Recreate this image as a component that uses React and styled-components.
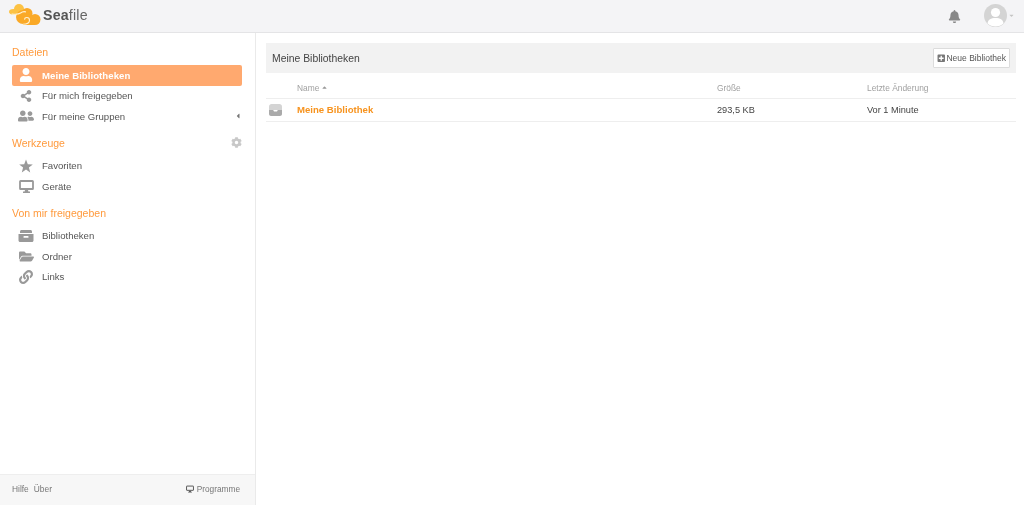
import React from 'react'
import styled, { createGlobalStyle } from 'styled-components'
import { FaUser, FaShareAlt, FaUserFriends, FaFolderOpen, FaLink, FaCog, FaBell, FaPlusSquare, FaCaretLeft, FaCaretUp, FaCaretDown } from 'react-icons/fa'

const GlobalStyle = createGlobalStyle`
  *, *::before, *::after { box-sizing: border-box; }
  html, body { margin: 0; padding: 0; height: 100%; background: #fff; }
  body { font-family: "Liberation Sans", Arial, sans-serif; color: #333; }
  #root { height: 505px; }
`

const Page = styled.div`
  width: 1024px;
  height: 505px;
  display: flex;
  flex-direction: column;
  overflow: hidden;
  background: #fff;
  /* the reference is a downscaled capture, its text is soft */
  filter: blur(0.3px);
`

const Header = styled.header`
  height: 33px;
  flex: none;
  display: flex;
  justify-content: space-between;
  align-items: center;
  background: #f4f4f6;
  border-bottom: 1px solid #e4e4e6;
`

const Logo = styled.div`
  display: flex;
  align-items: center;
  gap: 1px;
  padding: 0 0 2px 9px;
  font-size: 14.2px;
  color: #666;
  letter-spacing: 0.2px;
  b { font-weight: 700; color: #555; }
`

const HeaderRight = styled.div`
  display: flex;
  align-items: center;
  padding-right: 9px;
  color: #888;
`

const Avatar = styled.div`
  width: 23px;
  height: 23px;
  margin: 0 0 2px 23px;
  border-radius: 50%;
  background: #d4d4d4;
  overflow: hidden;
`

const Caret = styled.span`
  display: flex;
  font-size: 7px;
  color: #c4c4c4;
  margin: 0 0 2px 1px;
`

const Body = styled.div`
  flex: 1;
  display: flex;
  min-height: 0;
`

const Side = styled.aside`
  width: 256px;
  flex: none;
  display: flex;
  flex-direction: column;
  border-right: 1px solid #eaeaea;
`

const SideMain = styled.div`
  flex: 1;
  padding: 12px 13px 0 12px;
`

const SectionTitle = styled.h3`
  margin: ${p => p.$top || 0}px 0 0;
  height: 14px;
  display: flex;
  justify-content: space-between;
  align-items: center;
  font-size: 10.5px;
  line-height: 14px;
  font-weight: 400;
  color: #ff9a3d;
`

const Gear = styled.span`
  display: flex;
  font-size: 11px;
  color: #c8c8c8;
`

const NavList = styled.ul`
  list-style: none;
  margin: 6px 0 0;
  padding: 0;
`

const NavItem = styled.li`
  height: 20.5px;
  display: flex;
  align-items: center;
  padding-left: 6px;
  border-radius: 2px;
  font-size: 9.6px;
  font-weight: ${p => (p.$active ? 700 : 400)};
  letter-spacing: ${p => (p.$active ? '0.05px' : '0')};
  color: ${p => (p.$active ? '#fff' : '#555')};
  background: ${p => (p.$active ? '#ffa96f' : 'transparent')};
`

const NavIcon = styled.span`
  width: 16px;
  margin-right: 8px;
  display: flex;
  justify-content: center;
  font-size: ${p => p.$size || 14}px;
  color: ${p => (p.$active ? '#fff' : '#999')};
`

const Arrow = styled.span`
  margin-left: auto;
  display: flex;
  font-size: 8px;
  color: #777;
`

const SideFooter = styled.footer`
  height: 31px;
  flex: none;
  display: flex;
  justify-content: space-between;
  align-items: center;
  padding: 0 15px 3px 12px;
  background: #f7f7f7;
  border-top: 1px solid #eeeeee;
  font-size: 8.4px;
  color: #777;
`

const FooterLinks = styled.div`
  display: flex;
  gap: 5px;
`

const Programs = styled.div`
  display: flex;
  align-items: center;
  gap: 3px;
  font-size: 8.3px;
  color: #777;
`

const Main = styled.main`
  flex: 1;
  padding: 10px 8px 0 10px;
`

const PanelHead = styled.div`
  height: 30px;
  display: flex;
  justify-content: space-between;
  align-items: center;
  padding: 0 6px;
  background: #f2f2f2;
  font-size: 10.4px;
  color: #444;
`

const NewButton = styled.button`
  height: 20px;
  width: 77px;
  padding: 0;
  display: flex;
  align-items: center;
  justify-content: center;
  gap: 1px;
  background: #fff;
  border: 1px solid #dcdcdc;
  border-radius: 1px;
  font-family: inherit;
  font-size: 8.5px;
  color: #555;
  svg { font-size: 8.5px; color: #777; }
`

const Row = styled.div`
  display: grid;
  grid-template-columns: 31px 420px 150px 1fr;
  align-items: center;
  height: ${p => p.$h}px;
  padding: ${p => (p.$head ? '4px 0 0' : '0 0 1px')};
  border-bottom: 1px solid #eeeeee;
  font-size: ${p => (p.$head ? 8.4 : 9.2)}px;
  color: ${p => (p.$head ? '#a0a0a0' : '#444')};
`

const NameHead = styled.span`
  display: flex;
  align-items: center;
  gap: 2px;
  svg { font-size: 7px; color: #999; }
`

const LibName = styled.span`
  font-weight: 700;
  font-size: 9.6px;
  color: #f7931e;
`

const LibIconCell = styled.span`
  display: flex;
  padding-left: 3px;
`

const CloudLogo = () => (
  <svg width="33" height="22" viewBox="0 0 33 22">
    <g fill="#fcc244">
      <circle cx="10" cy="5" r="5" />
      <ellipse cx="4.500" cy="7.800" rx="4.500" ry="2.800" />
    </g>
    <g fill="#faa927">
      <circle cx="14" cy="13" r="7" />
      <circle cx="18" cy="9.500" r="5.500" />
      <circle cx="26" cy="15.500" r="5.500" />
      <rect x="14" y="15" width="12" height="6" />
    </g>
    <path d="M3 10c3.500.5 6.500.5 8.500-1 1.500-1.200 3-1.700 5-1.200" fill="none" stroke="#fff3d6" strokeWidth="1.200" strokeLinecap="round" />
    <path d="M14 20.300c3.500 0 6.500-1.300 6.500-4 0-1.700-1.200-2.800-2.700-2.800-1.200 0-2.100.8-2.100 1.800" fill="none" stroke="#fff3d6" strokeWidth="1.100" strokeLinecap="round" />
  </svg>
)

const StarIcon = () => (
  <svg width="14" height="14" viewBox="0 0 14 14">
    <polygon points="7,0.500 8.800,5.200 13.800,5.400 9.900,8.500 11.200,13.400 7,10.600 2.800,13.400 4.100,8.500 0.200,5.400 5.200,5.200" fill="#999" />
  </svg>
)

const MonitorIcon = ({ w = 15, h = 13, color = '#999' }) => (
  <svg width={w} height={h} viewBox="0 0 15 13">
    <rect x="1" y="1" width="13" height="8" rx=".6" fill="none" stroke={color} strokeWidth="1.800" />
    <path d="M6 10h3l.4 1.500H11V13H4v-1.500h1.600z" fill={color} />
  </svg>
)

const ArchiveIcon = () => (
  <svg width="16" height="13" viewBox="0 0 16 13">
    <path d="M2 2.500C2 1.700 2.700 1 3.500 1h9c.8 0 1.500.7 1.500 1.500V4H2z" fill="#999" />
    <path d="M.5 5h15v6.500c0 .8-.7 1.500-1.500 1.500H2c-.8 0-1.500-.7-1.500-1.500z" fill="#999" />
    <rect x="5.500" y="7" width="5" height="1.800" rx=".6" fill="#fff" />
  </svg>
)

const LibIcon = () => (
  <svg width="13" height="12" viewBox="0 0 13 12">
    <path d="M2.500 0h8C11.800 0 13 1 13 2.500V6H0V2.500C0 1 1.200 0 2.500 0z" fill="#d4d4d4" />
    <path d="M0 6h4.200l.8 1.500h3L8.800 6H13v4c0 1.200-.9 2-2 2H2c-1.100 0-2-.8-2-2z" fill="#aaaaaa" />
  </svg>
)

const AvatarIcon = () => (
  <svg width="23" height="23" viewBox="0 0 23 23">
    <circle cx="11.500" cy="8.500" r="4.600" fill="#fff" />
    <path d="M3.500 19.500c.4-3.800 3.400-5.500 8-5.500s7.600 1.700 8 5.500c-2.100 1.800-4.800 3-8 3s-5.900-1.200-8-3z" fill="#fff" />
  </svg>
)

export default function App() {
  return (
    <Page>
      <GlobalStyle />
      <Header>
        <Logo>
          <CloudLogo />
          <span><b>Sea</b>file</span>
        </Logo>
        <HeaderRight>
          <FaBell size={13} />
          <Avatar><AvatarIcon /></Avatar>
          <Caret><FaCaretDown /></Caret>
        </HeaderRight>
      </Header>
      <Body>
        <Side>
          <SideMain>
            <SectionTitle>Dateien</SectionTitle>
            <NavList>
              <NavItem $active>
                <NavIcon $active><FaUser /></NavIcon>Meine Bibliotheken
              </NavItem>
              <NavItem><NavIcon $size={12}><FaShareAlt /></NavIcon>Für mich freigegeben</NavItem>
              <NavItem>
                <NavIcon $size={16}><FaUserFriends /></NavIcon>Für meine Gruppen
                <Arrow><FaCaretLeft /></Arrow>
              </NavItem>
            </NavList>
            <SectionTitle $top={9}>
              Werkzeuge
              <Gear><FaCog /></Gear>
            </SectionTitle>
            <NavList>
              <NavItem><NavIcon><StarIcon /></NavIcon>Favoriten</NavItem>
              <NavItem><NavIcon><MonitorIcon /></NavIcon>Geräte</NavItem>
            </NavList>
            <SectionTitle $top={9}>Von mir freigegeben</SectionTitle>
            <NavList>
              <NavItem><NavIcon><ArchiveIcon /></NavIcon>Bibliotheken</NavItem>
              <NavItem><NavIcon $size={15}><FaFolderOpen /></NavIcon>Ordner</NavItem>
              <NavItem><NavIcon><FaLink /></NavIcon>Links</NavItem>
            </NavList>
          </SideMain>
          <SideFooter>
            <FooterLinks><span>Hilfe</span><span>Über</span></FooterLinks>
            <Programs><MonitorIcon w={8} h={8} color="#555" />Programme</Programs>
          </SideFooter>
        </Side>
        <Main>
          <PanelHead>
            Meine Bibliotheken
            <NewButton><FaPlusSquare />Neue Bibliothek</NewButton>
          </PanelHead>
          <Row $head $h={26}>
            <span />
            <NameHead>Name <FaCaretUp /></NameHead>
            <span>Größe</span>
            <span>Letzte Änderung</span>
          </Row>
          <Row $h={23}>
            <LibIconCell><LibIcon /></LibIconCell>
            <LibName>Meine Bibliothek</LibName>
            <span>293,5 KB</span>
            <span>Vor 1 Minute</span>
          </Row>
        </Main>
      </Body>
    </Page>
  )
}
